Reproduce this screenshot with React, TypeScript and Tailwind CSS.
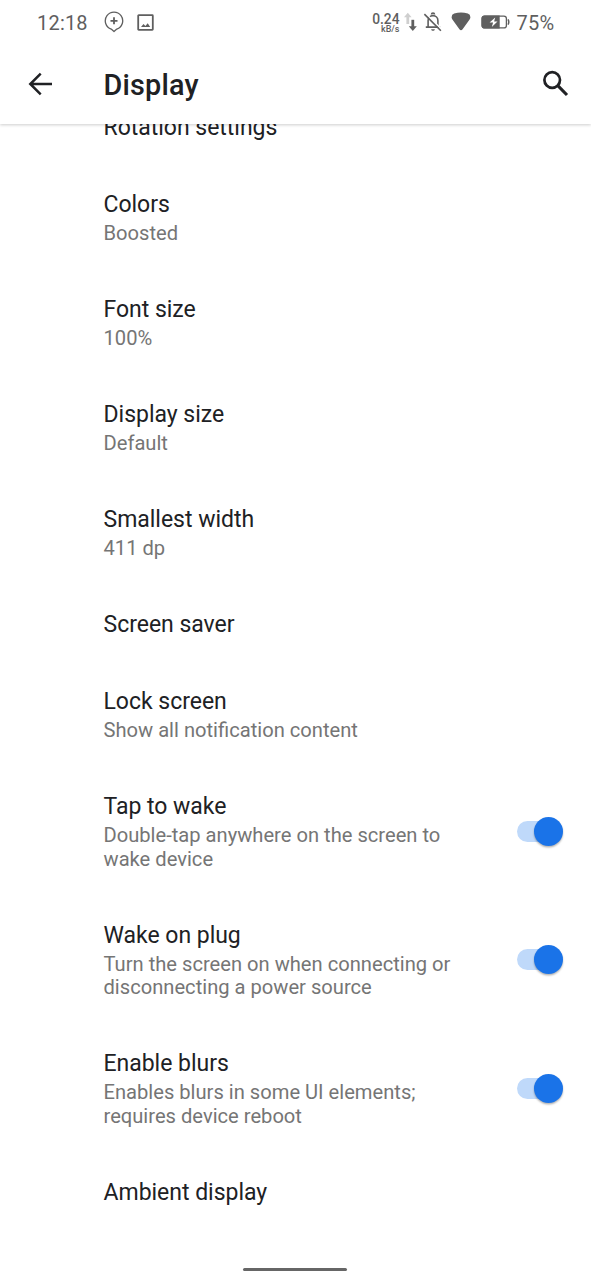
import React from "react";

type Setting = { title: string; summary?: string[]; on?: boolean };

const settings: Setting[] = [
  { title: "Rotation settings" },
  { title: "Colors", summary: ["Boosted"] },
  { title: "Font size", summary: ["100%"] },
  { title: "Display size", summary: ["Default"] },
  { title: "Smallest width", summary: ["411 dp"] },
  { title: "Screen saver" },
  { title: "Lock screen", summary: ["Show all notification content"] },
  { title: "Tap to wake", summary: ["Double-tap anywhere on the screen to", "wake device"], on: true },
  { title: "Wake on plug", summary: ["Turn the screen on when connecting or", "disconnecting a power source"], on: true },
  { title: "Enable blurs", summary: ["Enables blurs in some UI elements;", "requires device reboot"], on: true },
  { title: "Ambient display" },
];

function StatusBar() {
  return (
    <div className="flex h-[45px] shrink-0 items-center pl-[37px] pr-[36px] text-[20px] leading-[24px] tracking-[0.2px] text-[#5f5f5f]">
      <span className="w-[67px]">12:18</span>
      <svg width="20" height="22" viewBox="0 0 20 22" fill="none" stroke="currentColor" className="-mt-px shrink-0">
        <path d="M7.2 18.1A8.7 8.7 0 1 1 12.8 18.1L10 20.5Z" strokeWidth="1.3" strokeLinejoin="round" />
        <path d="M10 6.3v7M6.5 9.8h7" strokeWidth="1.8" />
      </svg>
      <svg width="17" height="17" viewBox="0 0 17 17" className="-mt-px ml-[13px] shrink-0" fill="none">
        <rect x="1.2" y="1.2" width="14.6" height="14.6" rx="0.5" stroke="currentColor" strokeWidth="1.8" />
        <path d="M4 13l2.5-3 1.9 2 2.3-2.8L13.2 13Z" fill="currentColor" />
      </svg>
      <div className="ml-auto flex items-center">
        <div className="mt-px flex w-[28px] flex-col items-end font-medium tracking-normal">
          <span className="text-[13.8px] leading-[12px]">0.24</span>
          <span className="text-[9px] leading-[9px]">kB/s</span>
        </div>
        <svg width="14" height="22" viewBox="0 0 14 22" className="-mt-px ml-[4px]" fill="none" strokeWidth="2.8">
          <path d="M3.8 13V4" stroke="#cfcfcf" />
          <path d="M0 6.2 3.8 1.8 7.6 6.2Z" fill="#cfcfcf" />
          <path d="M8.8 8.8v8" stroke="currentColor" />
          <path d="M4.8 15.3 8.8 20 12.8 15.3Z" fill="currentColor" />
        </svg>
        <svg width="20" height="20" viewBox="0 0 20 20" className="-mt-px ml-[5.5px]" fill="none" stroke="currentColor" strokeWidth="1.6">
          <path d="M5.1 15V8.5a4.9 4.9 0 0 1 9.8 0V15M2.8 15.1h14.4" />
          <path d="M8.5 2.6a1.5 1.5 0 0 1 3 0" />
          <path d="M8.1 17.2h3.8c-.2 1-1 1.6-1.9 1.6s-1.7-.6-1.9-1.6Z" fill="currentColor" stroke="none" />
          <path d="M2.6 1.3 18.9 17.6" stroke="white" strokeWidth="1.5" />
          <path d="M1.4 2.1 17.9 18.7" />
        </svg>
        <svg width="20" height="19" viewBox="0 0 20 19" className="-mt-[3px] ml-[8px]">
          <path d="M.6 5.2Q.6 2.4 3.2 1.6Q10-.6 16.8 1.6Q19.4 2.4 19.4 5.2Q19.4 6.3 18.6 7.5L11.6 17.2Q10 19.2 8.4 17.2L1.4 7.5Q.6 6.3.6 5.2Z" fill="currentColor" />
        </svg>
        <svg width="29" height="14" viewBox="0 0 29 14" className="-mt-px ml-[10px]">
          <rect x="1.1" y="1.1" width="24.3" height="11.8" rx="2.5" fill="none" stroke="currentColor" strokeWidth="1.3" />
          <path d="M3.5.5H18.7v13H3.5a3 3 0 0 1-3-3v-7a3 3 0 0 1 3-3Z" fill="currentColor" />
          <path d="M27 4.3q1.6 2.7 0 5.4" fill="none" stroke="currentColor" strokeWidth="1.5" />
          <path d="M14.2 2.4 8.6 7.6h3.5l-1.3 4.3 5.7-5.5h-3.4Z" fill="white" />
        </svg>
        <span className="ml-[6.5px] w-[38.5px] whitespace-nowrap">75%</span>
      </div>
    </div>
  );
}

function Header() {
  return (
    <header className="relative z-10 flex h-[124px] shrink-0 flex-col bg-white shadow-[0_1px_3px_rgba(0,0,0,0.2)]">
      <StatusBar />
      <div className="flex h-[79px] items-center">
        <svg width="24" height="24" viewBox="0 0 24 24" className="-mt-[2px] ml-[28px]" fill="none" stroke="#202124" strokeWidth="2.5" aria-label="Back">
          <path d="M24 12H2.8M12.7 1.7 2.3 12l10.4 10.3" />
        </svg>
        <h1 className="ml-[51.5px] text-[28.8px] font-medium leading-[34px] tracking-[0.2px] text-[#202124]">Display</h1>
        <svg width="27" height="27" viewBox="0 0 27 27" className="-mt-[2px] ml-auto mr-[22px]" fill="none" stroke="#202124" strokeWidth="2.7" aria-label="Search">
          <circle cx="10.2" cy="10" r="7.8" />
          <path d="M15.8 15.6 25 25" strokeWidth="3.1" />
        </svg>
      </div>
    </header>
  );
}

function Toggle() {
  return (
    <span role="switch" aria-checked="true" className="-mt-[2px] mr-[28px] flex h-[29px] w-[46px] shrink-0 items-center rounded-full">
      <span className="h-[21px] w-[31px] rounded-full bg-[#bfd9fa]" />
      <span className="-ml-[14px] size-[29px] shrink-0 rounded-full bg-[#1a73e8] shadow-[0_1.5px_2px_rgba(0,0,0,0.3)]" />
    </span>
  );
}

function Row({ title, summary, on }: Setting) {
  return (
    <li className="flex items-center justify-between py-[25px] pl-[103.5px]">
      <div>
        <div className="text-[23px] leading-[27px] tracking-[-0.02px] text-[#202124]">{title}</div>
        {summary && (
          <div className="mt-[4.4px] text-[20.15px] leading-[23.6px] text-[#757575]">
            {summary.map((line) => (
              <div key={line} className="whitespace-nowrap">{line}</div>
            ))}
          </div>
        )}
      </div>
      {on && <Toggle />}
    </li>
  );
}

export default function App() {
  return (
    <div className="flex h-[1280px] w-[591px] flex-col overflow-hidden bg-white font-[Roboto,sans-serif]">
      <Header />
      <main className="min-h-0 flex-1 overflow-hidden">
        <ul className="-mt-[35px]">
          {settings.map((s) => (
            <Row key={s.title} {...s} />
          ))}
        </ul>
      </main>
      <div className="flex h-[12px] shrink-0 items-start justify-center pr-px">
        <div className="h-[3px] w-[104px] rounded-full bg-[#666666]" />
      </div>
    </div>
  );
}
